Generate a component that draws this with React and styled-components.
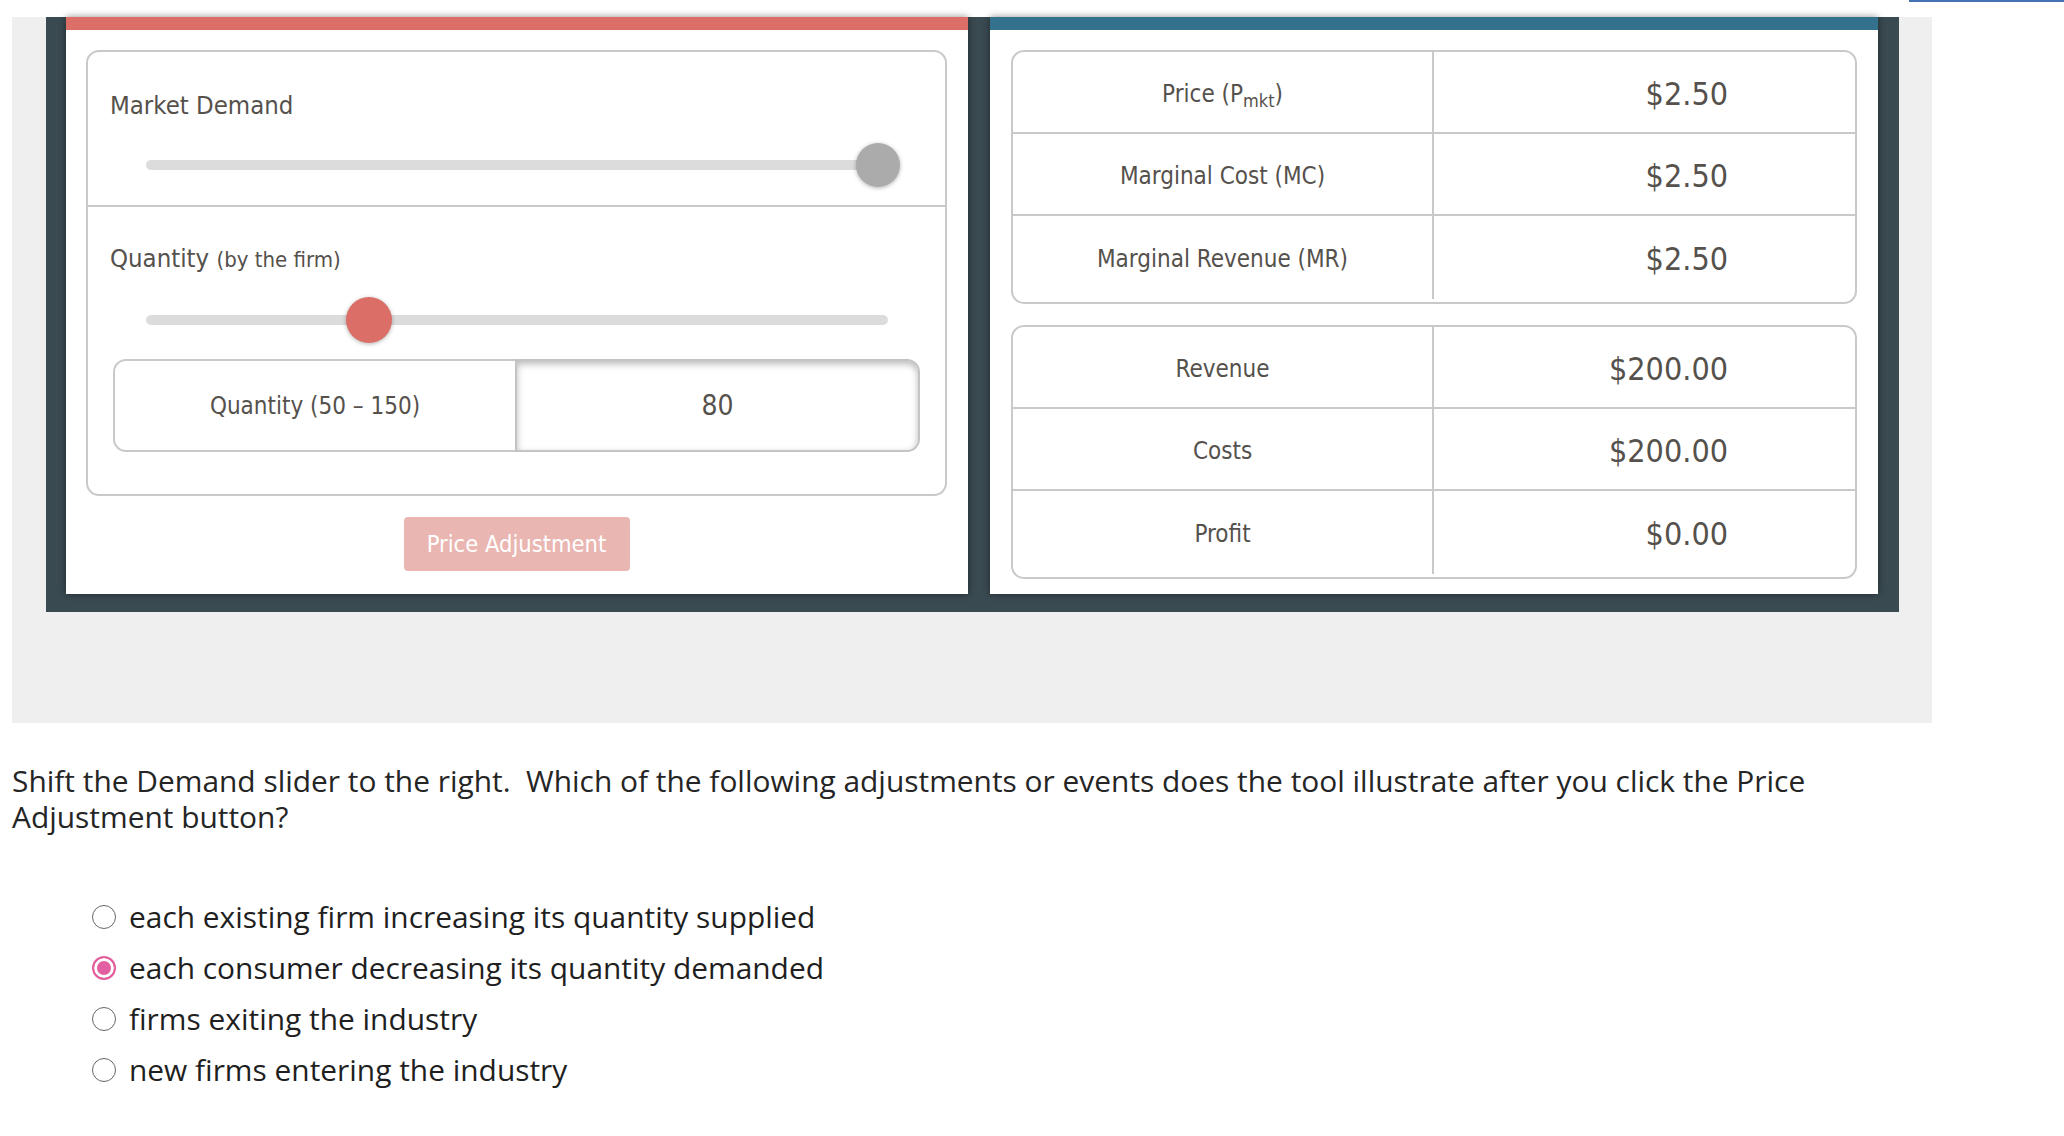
import React from 'react';
import styled, { createGlobalStyle } from 'styled-components';

const GlobalStyle = createGlobalStyle`
  body {
    margin: 0;
    background: #fff;
  }
`;

const widgetFont = `"DejaVu Sans Condensed", "DejaVu Sans", sans-serif`;
const textFont = `"Open Sans", Lato, sans-serif`;

const App = () => {
  const topRows = [
    { label: <>Price (P<Sub>mkt</Sub>)</>, value: '$2.50' },
    { label: 'Marginal Cost (MC)', value: '$2.50' },
    { label: 'Marginal Revenue (MR)', value: '$2.50' },
  ];

  const bottomRows = [
    { label: 'Revenue', value: '$200.00' },
    { label: 'Costs', value: '$200.00' },
    { label: 'Profit', value: '$0.00' },
  ];

  const options = [
    { text: 'each existing firm increasing its quantity supplied', checked: false },
    { text: 'each consumer decreasing its quantity demanded', checked: true },
    { text: 'firms exiting the industry', checked: false },
    { text: 'new firms entering the industry', checked: false },
  ];

  return (
    <>
      <GlobalStyle />
      <TopBar>
        <TopLink />
      </TopBar>
      <Page>
        <Stage>
          <Frame>
            <Card>
              <CardBar color="#db6e66" />
              <LeftBody>
                <ControlBox>
                  <Section divided>
                    <Label>Market Demand</Label>
                    <Slider>
                      <Track />
                      <Knob color="#ababab" size={44} style={{ left: '98.6%' }} />
                    </Slider>
                  </Section>
                  <Section>
                    <Label>
                      Quantity <Small>(by the firm)</Small>
                    </Label>
                    <Slider>
                      <Track />
                      <Knob color="#db6e66" size={46} style={{ left: '30%' }} />
                    </Slider>
                    <InputGroup>
                      <InputLabel>Quantity (50 – 150)</InputLabel>
                      <InputValue>80</InputValue>
                    </InputGroup>
                  </Section>
                </ControlBox>
                <AdjustButton>Price Adjustment</AdjustButton>
              </LeftBody>
            </Card>

            <Card>
              <CardBar color="#33718d" />
              <RightBody>
                <DataTable>
                  {topRows.map((row, i) => (
                    <DataRow key={i} last={i === topRows.length - 1}>
                      <LabelCell>{row.label}</LabelCell>
                      <ValueCell>{row.value}</ValueCell>
                    </DataRow>
                  ))}
                </DataTable>
                <DataTable>
                  {bottomRows.map((row, i) => (
                    <DataRow key={i} last={i === bottomRows.length - 1}>
                      <LabelCell>{row.label}</LabelCell>
                      <ValueCell>{row.value}</ValueCell>
                    </DataRow>
                  ))}
                </DataTable>
              </RightBody>
            </Card>
          </Frame>
        </Stage>

        <Question>
          Shift the Demand slider to the right.&nbsp; Which of the following adjustments or events does the tool illustrate after you click the Price Adjustment button?
        </Question>

        <Options>
          {options.map((opt) => (
            <Option key={opt.text}>
              <Radio checked={opt.checked} />
              <span>{opt.text}</span>
            </Option>
          ))}
        </Options>
      </Page>
    </>
  );
};

const TopBar = styled.div`
  height: 17px;
  display: flex;
  justify-content: flex-end;
`;

const TopLink = styled.span`
  width: 155px;
  height: 0;
  border-top: 2px solid #4272b4;
`;

const Page = styled.div`
  padding: 0 12px 30px 12px;
`;

const Stage = styled.div`
  width: 1920px;
  box-sizing: border-box;
  padding: 0 33px 111px 34px;
  background: #efefef;
`;

const Frame = styled.div`
  display: grid;
  grid-template-columns: 902px 888px;
  column-gap: 22px;
  padding: 0 21px 18px 20px;
  background: #394a50;
`;

const Card = styled.div`
  display: flex;
  flex-direction: column;
  background: #fff;
  box-shadow: 0 0 7px rgba(0, 0, 0, 0.45);
  font-family: ${widgetFont};
  font-stretch: condensed;
  color: #55514c;
`;

const CardBar = styled.div`
  height: 13px;
  background: ${(p) => p.color};
`;

const LeftBody = styled.div`
  display: flex;
  flex-direction: column;
  align-items: center;
  padding: 20px 21px 22px 20px;
`;

const ControlBox = styled.div`
  align-self: stretch;
  border: 2px solid #c9c9c9;
  border-radius: 13px;
`;

const Section = styled.div`
  padding: ${(p) => (p.divided ? '37px 22px 17px 22px' : '35px 22px 42px 22px')};
  border-bottom: ${(p) => (p.divided ? '2px solid #c9c9c9' : 'none')};
`;

const Label = styled.div`
  font-size: 25.5px;
  line-height: 32px;
`;

const Small = styled.span`
  font-size: 22px;
`;

const Slider = styled.div`
  position: relative;
  height: 46px;
  margin: 21px 35px 0 36px;
  display: flex;
  align-items: center;
`;

const Track = styled.div`
  width: 100%;
  height: 10px;
  border-radius: 5px;
  background: #dcdcdc;
`;

const Knob = styled.div`
  position: absolute;
  top: 50%;
  width: ${(p) => p.size}px;
  height: ${(p) => p.size}px;
  border-radius: 50%;
  background: ${(p) => p.color};
  transform: translate(-50%, -50%);
  box-shadow: 0 1px 4px rgba(0, 0, 0, 0.3);
`;

const InputGroup = styled.div`
  display: grid;
  grid-template-columns: 402px 1fr;
  height: 93px;
  margin: 16px 3px 0 3px;
`;

const InputLabel = styled.div`
  display: flex;
  align-items: center;
  justify-content: center;
  border: 2px solid #c9c9c9;
  border-right: none;
  border-radius: 13px 0 0 13px;
  font-size: 24px;
`;

const InputValue = styled.div`
  display: flex;
  align-items: center;
  justify-content: center;
  border: 2px solid #c4c4c4;
  border-radius: 0 13px 13px 0;
  box-shadow: inset 0 3px 7px rgba(0, 0, 0, 0.28);
  font-size: 28px;
`;

const AdjustButton = styled.button`
  margin-top: 21px;
  width: 226px;
  height: 54px;
  border: none;
  border-radius: 4px;
  background: #e9b6b2;
  color: #fff;
  font-family: ${widgetFont};
  font-stretch: condensed;
  font-size: 23.5px;
  padding: 0;
`;

const RightBody = styled.div`
  display: flex;
  flex-direction: column;
  gap: 21px;
  padding: 20px 21px 15px 21px;
`;

const DataTable = styled.div`
  border: 2px solid #c9c9c9;
  border-radius: 13px;
  padding-bottom: 3px;
  overflow: hidden;
`;

const DataRow = styled.div`
  display: grid;
  grid-template-columns: 419px 1fr;
  height: ${(p) => (p.last ? '83px' : '80px')};
  border-bottom: ${(p) => (p.last ? 'none' : '2px solid #c9c9c9')};
`;

const LabelCell = styled.div`
  display: flex;
  align-items: center;
  justify-content: center;
  padding-top: 3px;
  font-size: 24px;
`;

const Sub = styled.span`
  position: relative;
  top: 7px;
  font-size: 18px;
`;

const ValueCell = styled.div`
  display: flex;
  align-items: center;
  justify-content: flex-end;
  padding: 3px 127px 0 0;
  border-left: 2px solid #c9c9c9;
  font-size: 32px;
`;

const Question = styled.p`
  margin: 40px 0 0 0;
  width: 1920px;
  font-family: ${textFont};
  font-size: 29.9px;
  line-height: 36px;
  color: #252525;
`;

const Options = styled.div`
  display: flex;
  flex-direction: column;
  margin-top: 56px;
  padding-left: 80px;
`;

const Option = styled.label`
  display: flex;
  align-items: center;
  gap: 13px;
  height: 51px;
  font-family: ${textFont};
  font-size: 29.9px;
  color: #1f1f1f;
`;

const Radio = styled.span`
  flex-shrink: 0;
  box-sizing: border-box;
  width: 24px;
  height: 24px;
  border-radius: 50%;
  border: ${(p) => (p.checked ? '2px solid #e2609f' : '1.5px solid #666')};
  background: ${(p) => (p.checked ? '#e2609f' : '#fff')};
  box-shadow: ${(p) => (p.checked ? 'inset 0 0 0 3px #fff' : 'none')};
`;

export default App;
